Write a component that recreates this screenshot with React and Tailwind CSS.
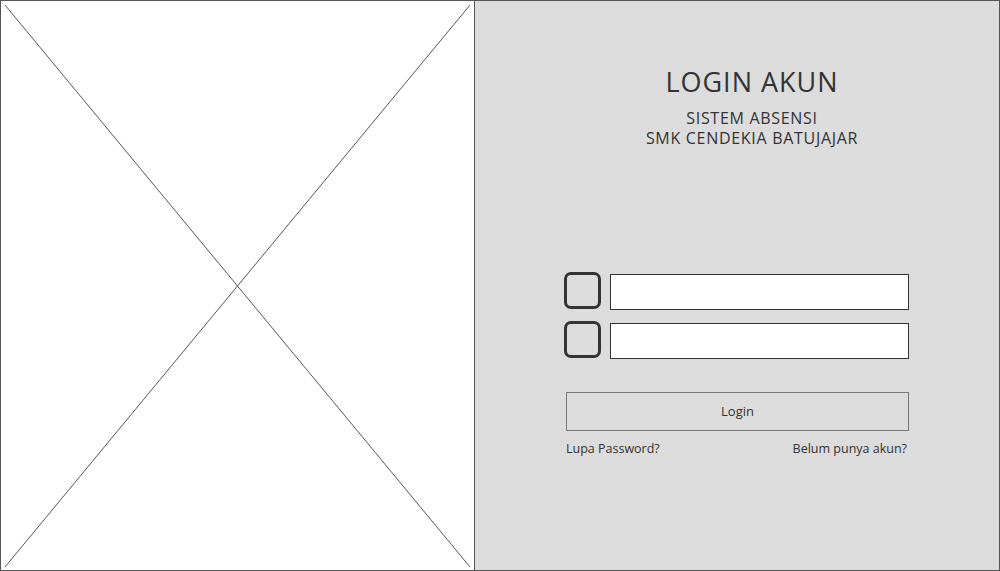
const Placeholder = () => (
  <svg className="absolute inset-0 h-full w-full" viewBox="0 0 474 569" preserveAspectRatio="none">
    <line x1="4" y1="4" x2="470" y2="566" stroke="#555" strokeWidth="1" />
    <line x1="470" y1="4" x2="4" y2="566" stroke="#555" strokeWidth="1" />
  </svg>
);

const IconBox = () => (
  <div className="h-[37px] w-[37px] shrink-0 rounded-[7px] border-[3px] border-[#333]" />
);

const Field = () => (
  <div className="flex items-start gap-[9px]">
    <IconBox />
    <div className="mt-[2px] h-[36px] w-[299px] border border-[#333] bg-white" />
  </div>
);

export default function App() {
  return (
    <div
      className="flex h-[571px] w-[1000px] border border-[#555] text-[#333]"
      style={{ fontFamily: '"Open Sans", "Liberation Sans", sans-serif' }}
    >
      <div className="relative w-[474px] shrink-0 border-r border-[#555] bg-white">
        <Placeholder />
      </div>
      <div className="flex flex-1 flex-col bg-[#dcdcdc]">
        <div className="flex flex-col items-center pl-[30px] pt-[63px]">
          <h1 className="text-[27px] leading-[36px] tracking-[1px]">LOGIN AKUN</h1>
          <p className="mt-[8px] text-center text-[16px] leading-[20px] tracking-[0.7px]">
            SISTEM ABSENSI
            <br />
            SMK CENDEKIA BATUJAJAR
          </p>
        </div>
        <div className="ml-[89px] mt-[124px] flex w-[345px] flex-col">
          <div className="flex flex-col gap-[11px]">
            <Field />
            <Field />
          </div>
          <button className="ml-[2px] mt-[33px] h-[39px] w-[343px] border border-[#777] text-[13px]">
            Login
          </button>
          <div className="ml-[2px] mt-[9px] flex w-[341px] justify-between text-[12.5px]">
            <span>Lupa Password?</span>
            <span>Belum punya akun?</span>
          </div>
        </div>
      </div>
    </div>
  );
}
